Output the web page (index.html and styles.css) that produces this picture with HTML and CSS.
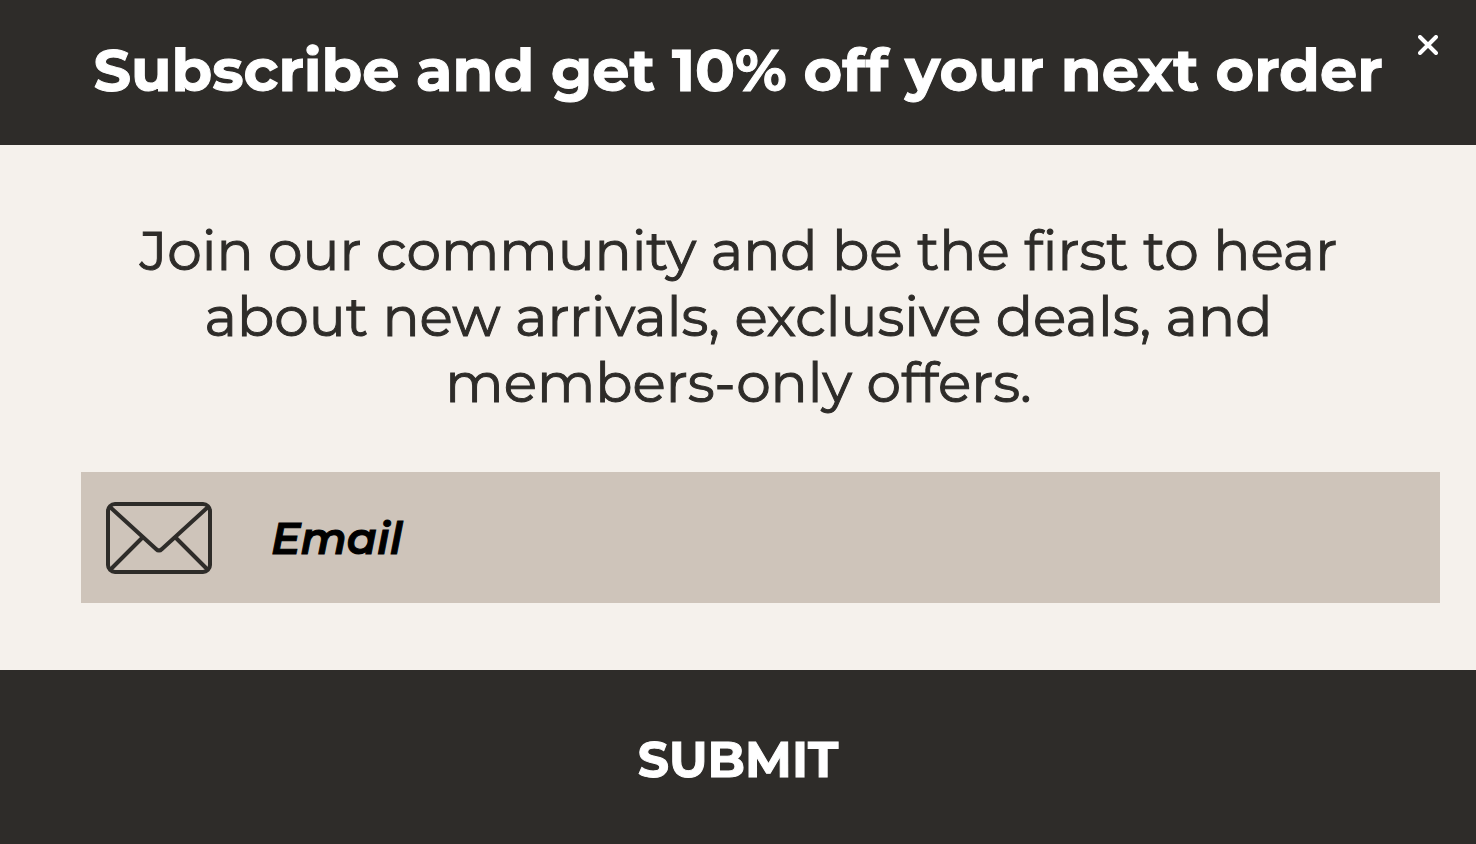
FILE: index.html
```html
<!DOCTYPE html>
<html lang="en">
<head>
<meta charset="utf-8">
<meta name="viewport" content="width=device-width, initial-scale=1">
<title>Subscribe</title>
<link rel="stylesheet" href="styles.css">
</head>
<body>
<form class="popup">
  <header class="popup-header">
    <h1 class="popup-title">Subscribe and get 10% off your next order</h1>
    <button class="close" type="button" aria-label="Close">
      <svg viewBox="0 0 20 20" width="20" height="20" aria-hidden="true"><path d="M2 2 18 18M18 2 2 18"/></svg>
    </button>
  </header>
  <main class="popup-body">
    <p class="message">Join our community and be the first to hear about new arrivals, exclusive deals, and members-only offers.</p>
    <label class="field">
      <svg class="mail" viewBox="0 0 106 72" width="106" height="72" aria-hidden="true">
        <rect x="2" y="2" width="102" height="68" rx="7"/>
        <path d="M4 5 50 47Q53 50 56 47L102 5M4 68 36 36M102 68 70 36"/>
      </svg>
      <input class="email" type="email" placeholder="Email" aria-label="Email">
    </label>
  </main>
  <button class="submit" type="submit">SUBMIT</button>
</form>
</body>
</html>
```
FILE: styles.css
```css
* {
  box-sizing: border-box;
}

body {
  margin: 0;
  background: #2e2c29;
  font-family: Montserrat, Inter, "Open Sans", sans-serif;
}

.popup {
  display: flex;
  flex-direction: column;
  min-height: 100vh;
  background: #f5f1ec;
}

.popup-header {
  position: relative;
  padding: 30px 88px 35px;
  background: #2e2c29;
}

.popup-title {
  margin: 0;
  color: #fff;
  font-size: 59px;
  font-weight: 700;
  line-height: 80px;
  text-align: center;
  white-space: nowrap;
  -webkit-text-stroke: 1px #fff;
}

.close {
  position: absolute;
  top: 35px;
  right: 38px;
  display: flex;
  padding: 0;
  border: 0;
  background: none;
  cursor: pointer;
}

.close svg {
  fill: none;
  stroke: #fff;
  stroke-width: 4;
  stroke-linecap: round;
}

.popup-body {
  flex: 1;
  padding: 73px 36px 66px 81px;
}

.message {
  margin: 0 80px 56px 36px;
  color: #2e2c29;
  font-size: 55px;
  font-weight: 400;
  line-height: 66px;
  text-align: center;
  -webkit-text-stroke: 1px #2e2c29;
}

.field {
  display: flex;
  align-items: center;
  gap: 59px;
  height: 131px;
  padding: 0 25px;
  background: #cec4ba;
}

.mail {
  flex: none;
  fill: none;
  stroke: #2e2c29;
  stroke-width: 4;
}

.email {
  flex: 1;
  min-width: 0;
  padding: 0;
  border: 0;
  outline: 0;
  background: none;
  color: #000;
  font: italic 600 44px/60px Montserrat, Inter, "Open Sans", sans-serif;
  -webkit-text-stroke: 1px #000;
}

.email::placeholder {
  color: #000;
  opacity: 1;
}

.submit {
  height: 174px;
  padding: 6px 0 0;
  border: 0;
  background: #2e2c29;
  color: #fff;
  font: 700 49px/60px Montserrat, Inter, "Open Sans", sans-serif;
  -webkit-text-stroke: 1px #fff;
  cursor: pointer;
}
```
